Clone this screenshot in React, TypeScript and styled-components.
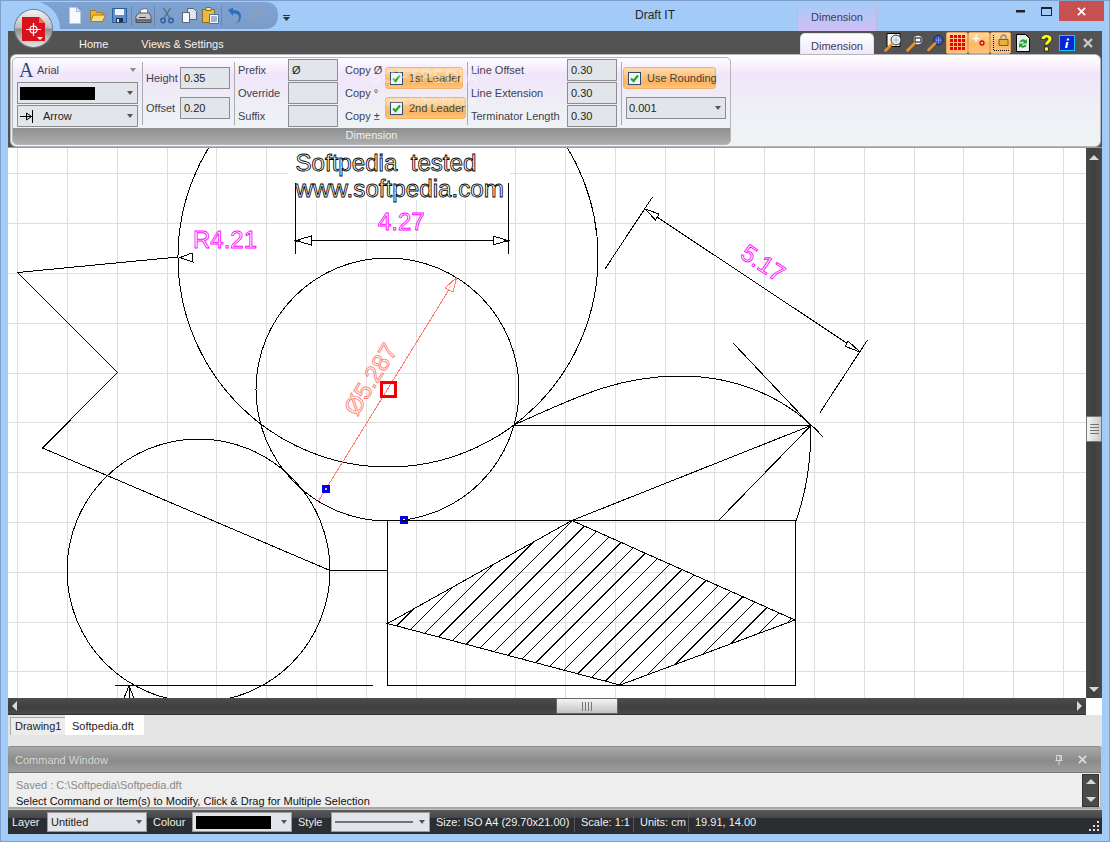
import React from 'react';
import styled, { createGlobalStyle } from 'styled-components';

const GlobalStyle = createGlobalStyle`
  html, body { margin: 0; padding: 0; background: #a2cbf7; }
  * { box-sizing: border-box; }
`;

const Window = styled.div`
  position: relative;
  width: 1110px;
  height: 842px;
  padding: 0 7px 7px;
  display: flex;
  flex-direction: column;
  overflow: hidden;
  background: #a2cbf7;
  border: 1px solid #7f9ecb;
  font-family: "Liberation Sans", Arial, sans-serif;
  font-size: 11px;
  color: #3c4250;
`;

/* title bar */
const TitleBar = styled.div`
  height: 30px;
  display: flex;
  flex: none;
`;
const Qat = styled.div`
  width: 238px;
  height: 27px;
  margin: 1px 0 0 32px;
  padding-left: 24px;
  display: flex;
  align-items: center;
  background: linear-gradient(#7ea3d2, #7b9cc8);
  clip-path: path('M0 0 H224 Q238 0 238 13 Q238 27 224 27 H20 Q20 8 0 0 Z');
`;
const QatSlot = styled.span<{ $w: number }>`
  width: ${p => p.$w}px;
  display: flex;
  justify-content: center;
  align-items: center;
`;
const QatSep = styled.i`
  width: 1px;
  height: 20px;
  background: #6c87ad;
  margin: 0 1px;
`;
const Chevron = styled.div`
  width: 15px;
  padding: 10px 0 0 5px;
`;
const AppTitle = styled.div`
  width: 504px;
  padding: 7px 0 0 220px;
  text-align: center;
  font-size: 12px;
  color: #22262c;
`;
const ContextTab = styled.div`
  width: 80px;
  height: 29px;
  margin-top: 1px;
  padding-top: 9px;
  text-align: center;
  color: #3d3d50;
  background: linear-gradient(#a4ccf6, #d0bef6);
  border-left: 1px solid #c5b8e0;
  border-right: 1px solid #c5b8e0;
`;
const WinControls = styled.div`
  margin-left: auto;
  margin-right: -2px;
  display: flex;
  align-items: flex-start;
`;
const WinBtn = styled.div<{ $w: number; $close?: boolean }>`
  width: ${p => p.$w}px;
  height: 20px;
  display: flex;
  align-items: center;
  justify-content: center;
  background: ${p => (p.$close ? '#c75050' : 'transparent')};
`;

/* ribbon */
const Ribbon = styled.div`
  height: 117px;
  flex: none;
  background: #535353;
  border-bottom: 1px solid #9c9c9c;
  display: flex;
  flex-direction: column;
`;
const TabRow = styled.div`
  height: 23px;
  display: flex;
  align-items: stretch;
  flex: none;
`;
const RibbonTab = styled.div<{ $ml: number }>`
  margin-left: ${p => p.$ml}px;
  padding-top: 7px;
  color: #f2f2f2;
  white-space: nowrap;
`;
const ActiveTab = styled.div`
  width: 74px;
  margin: 2px 0 0 auto;
  padding-top: 6px;
  text-align: center;
  color: #3d3d55;
  border-radius: 5px 5px 0 0;
  border: 1px solid #d9e2ea;
  border-bottom: 0;
  background: linear-gradient(#ffffff, #f2e6fa);
`;
const ToolStrip = styled.div`
  margin: 0 3px 0 9px;
  display: flex;
  align-items: center;
`;
const ToolBtn = styled.div<{ $w: number; $on?: boolean }>`
  width: ${p => p.$w}px;
  height: 22px;
  display: flex;
  align-items: center;
  justify-content: center;
  ${p =>
    p.$on
      ? `background: linear-gradient(#fdd9a6, #fbb965 55%, #fcc27c);
         border: 1px solid #e6a55a; border-radius: 2px;`
      : ''}
`;
const RibbonPanel = styled.div`
  height: 93px;
  margin: 0 0 0 2px;
  width: 1091px;
  padding: 2px 0 0 1px;
  border: 1px solid #b4b8bd;
  border-radius: 6px;
  background: linear-gradient(#ffffff 0, #fbf6fe 8%, #f1e5fa 22%, #eef0f5 60%, #f0f3f5 100%);
`;
const Group = styled.div`
  position: relative;
  width: 719px;
  height: 88px;
  display: flex;
  flex-direction: column;
  border: 1px solid #b5b7bc;
  border-radius: 5px;
  overflow: hidden;
`;
const GroupBody = styled.div`
  height: 70px;
  padding-top: 1px;
  display: flex;
  flex: none;
`;
const GroupCaption = styled.div`
  flex: 1;
  text-align: center;
  color: #eeeeee;
  line-height: 15px;
  background: linear-gradient(#8f8f8f, #adadad);
`;
const Col = styled.div<{ $ml: number; $w: number; $mid?: boolean }>`
  margin-left: ${p => p.$ml}px;
  width: ${p => p.$w}px;
  display: flex;
  flex-direction: column;
  gap: ${p => (p.$mid ? 8 : 1)}px;
  padding-top: ${p => (p.$mid ? 8 : 0)}px;
`;
const VRule = styled.div<{ $ml: number }>`
  width: 1px;
  margin: 3px 0 3px ${p => p.$ml}px;
  background: #a9adb3;
`;
const Row = styled.div`
  height: 22px;
  display: flex;
  align-items: center;
  white-space: nowrap;
`;
const Label = styled.span<{ $w: number; $ml?: number }>`
  width: ${p => p.$w}px;
  margin-left: ${p => p.$ml ?? 0}px;
  flex: none;
`;
const Field = styled.div`
  width: 50px;
  height: 22px;
  flex: none;
  padding-left: 3px;
  line-height: 20px;
  color: #222;
  background: #e2e6ea;
  border: 1px solid #8b8d90;
`;
const Combo = styled.div<{ $w?: number; $ml?: number }>`
  width: ${p => (p.$w ? `${p.$w}px` : '100%')};
  margin-left: ${p => p.$ml ?? 0}px;
  height: 22px;
  flex: none;
  padding: 0 2px;
  display: flex;
  align-items: center;
  color: #222;
  background: #e2e6ea;
  border: 1px solid #8b8d90;
`;
const ComboArrow = styled.i<{ $c?: string }>`
  margin-left: auto;
  margin-right: 2px;
  width: 0;
  height: 0;
  border-left: 3.5px solid transparent;
  border-right: 3.5px solid transparent;
  border-top: 4px solid ${p => p.$c ?? '#555'};
`;
const Swatch = styled.div<{ $w: number }>`
  width: ${p => p.$w}px;
  height: 13px;
  background: #000;
`;
const FontGlyph = styled.span`
  width: 20px;
  padding-left: 2px;
  font: 20px "Liberation Serif", serif;
  color: #24477e;
`;
const CheckBtn = styled.div<{ $w: number }>`
  width: ${p => p.$w}px;
  height: 22px;
  padding-left: 4px;
  display: flex;
  align-items: center;
  gap: 6px;
  color: #45423c;
  white-space: nowrap;
  border: 1px solid #f4b164;
  border-radius: 3px;
  background: linear-gradient(#ffdcae, #fdbf73 50%, #fcb45f 75%, #fdc684);
`;
const CheckBox = styled.span`
  width: 13px;
  height: 13px;
  flex: none;
  display: flex;
  background: #f2f4f6;
  border: 1px solid #2d4d73;
`;
const Watermark = styled.div<{ $x: number; $y: number; $size: number }>`
  position: absolute;
  left: ${p => p.$x}px;
  top: ${p => p.$y}px;
  font-size: ${p => p.$size}px;
  font-weight: bold;
  color: rgba(255, 255, 255, 0.35);
  white-space: nowrap;
  pointer-events: none;
`;

/* app orb */
const Orb = styled.div`
  position: absolute;
  left: 14px;
  top: 9px;
  width: 37px;
  height: 37px;
  display: flex;
  align-items: center;
  justify-content: center;
  border-radius: 50%;
  background: linear-gradient(#f4f4f4, #bcbcbc 48%, #8d8d8d 52%, #e8e8e8);
  box-shadow: 0 0 0 1px #6f7f92;
`;

/* workspace */
const Workspace = styled.div`
  height: 550px;
  flex: none;
  display: flex;
  background: #fff;
`;
const Sheet = styled.svg`
  display: block;
  flex: none;
  shape-rendering: crispEdges;
  background: #fff;
`;
const OutlineText = styled.text<{ $ink: string; $fill?: string; $size?: number }>`
  font-family: "Liberation Sans", Arial, sans-serif;
  font-size: ${p => p.$size ?? 24}px;
  white-space: pre;
  fill: ${p => p.$fill ?? 'none'};
  stroke: ${p => p.$ink};
  stroke-width: 0.85px;
  opacity: 0.99;
`;
const VScroll = styled.div`
  width: 16px;
  display: flex;
  flex-direction: column;
  align-items: center;
  background: linear-gradient(90deg, #484848, #3f3f3f 50%, #4a4a4a);
`;
const Thumb = styled.div`
  width: 16px;
  height: 26px;
  margin-top: 256px;
  display: flex;
  flex-direction: column;
  align-items: center;
  justify-content: center;
  gap: 2px;
  background: linear-gradient(90deg, #f6f6f6, #c9c9c9);
  border: 1px solid #777;
`;
const Grip = styled.i`
  width: 9px;
  height: 1px;
  background: #777;
`;
const ArrowUp = styled.i<{ $mt?: number; $c?: string }>`
  margin-top: ${p => p.$mt ?? 0}px;
  width: 0;
  height: 0;
  border-left: 5px solid transparent;
  border-right: 5px solid transparent;
  border-bottom: 5px solid ${p => p.$c ?? '#d8d8d8'};
`;
const ArrowDown = styled.i<{ $mt?: number; $c?: string }>`
  margin-top: ${p => p.$mt ?? 0}px;
  width: 0;
  height: 0;
  border-left: 5px solid transparent;
  border-right: 5px solid transparent;
  border-top: 5px solid ${p => p.$c ?? '#d8d8d8'};
`;
const HScrollRow = styled.div`
  height: 17px;
  flex: none;
  display: flex;
  background: #fff;
`;
const HScroll = styled.div`
  width: 1078px;
  display: flex;
  align-items: center;
  padding: 0 4px;
  background: linear-gradient(#4c4c4c, #3f3f3f 60%, #4a4a4a);
  border-bottom: 1px solid #333;
`;
const HThumb = styled.div`
  width: 62px;
  height: 16px;
  margin-left: 539px;
  display: flex;
  justify-content: center;
  align-items: center;
  gap: 2px;
  background: linear-gradient(#f4f4f4, #c4c4c4);
  border: 1px solid #666;
`;
const HGrip = styled.i`
  width: 1px;
  height: 9px;
  background: #777;
`;
const ArrowLeft = styled.i`
  border-top: 5px solid transparent;
  border-bottom: 5px solid transparent;
  border-right: 5px solid #d8d8d8;
`;
const ArrowRight = styled.i`
  margin-left: auto;
  border-top: 5px solid transparent;
  border-bottom: 5px solid transparent;
  border-left: 5px solid #d8d8d8;
`;

/* document tabs */
const DocStrip = styled.div`
  height: 31px;
  flex: none;
  padding-left: 2px;
  display: flex;
  align-items: flex-start;
  background: #e4e4e4;
`;
const DocTab = styled.div<{ $active?: boolean }>`
  color: #222;
  white-space: nowrap;
  ${p =>
    p.$active
      ? `width: 79px; height: 20px; padding: 5px 0 0 7px; background: #fff;`
      : `width: 55px; height: 18px; margin-top: 2px; padding: 2px 0 0 4px;
         background: #ececec; border: 1px solid #aaa; border-right: 0; border-bottom: 0;`}
`;

/* command window */
const CommandWindow = styled.div`
  flex: none;
  width: 1093px;
  display: flex;
  flex-direction: column;
`;
const CommandHead = styled.div`
  height: 27px;
  padding: 0 14px 0 7px;
  display: flex;
  align-items: center;
  color: #d6d6d6;
  border-top: 1px solid #8d8d8d;
  border-radius: 3px 3px 0 0;
  background: linear-gradient(#a8a8a8, #8b8b8b 55%, #9d9d9d);
  border-bottom: 1px solid #777;
`;
const HeadIcons = styled.div`
  margin-left: auto;
  display: flex;
  align-items: center;
  gap: 15px;
`;
const CommandBody = styled.div`
  height: 36px;
  padding: 5px 0 0 7px;
  display: flex;
  justify-content: space-between;
  background: #eeeeee;
  border: 1px solid #b9b9b9;
  border-top: 0;
  border-bottom: 2px solid #a8a8a8;
`;
const LogLine = styled.div<{ $muted?: boolean }>`
  height: 16px;
  line-height: 15px;
  color: ${p => (p.$muted ? '#8a8a8a' : '#111')};
`;
const LogScroll = styled.div`
  width: 17px;
  margin: -4px 1px 0 0;
  height: 33px;
  padding: 4px 0;
  display: flex;
  flex-direction: column;
  align-items: center;
  justify-content: space-between;
  background: #4a4a4a;
  border: 1px solid #333;
`;

/* status bar */
const StatusBar = styled.div`
  height: 24px;
  margin-top: 1px;
  flex: none;
  padding-left: 4px;
  display: flex;
  align-items: center;
  color: #f0f0f0;
  white-space: nowrap;
  background: linear-gradient(#5a5a5a, #44464a 33%, #2c2d31 34%, #2d2e32);
`;
const StatusLabel = styled.span<{ $w: number; $pl?: number }>`
  width: ${p => p.$w}px;
  padding-left: ${p => p.$pl ?? 0}px;
  flex: none;
`;
const StatusCombo = styled.div<{ $w: number }>`
  width: ${p => p.$w}px;
  height: 20px;
  flex: none;
  padding: 0 2px 0 3px;
  display: flex;
  align-items: center;
  color: #222;
  background: #e2e6ea;
  border: 1px solid #9a9a9a;
`;
const StatusCell = styled.span<{ $w: number; $last?: boolean }>`
  width: ${p => p.$w}px;
  height: 20px;
  line-height: 20px;
  padding-left: 6px;
  flex: none;
  border-right: ${p => (p.$last ? '0' : '1px solid #55575b')};
`;
const ResizeGrip = styled.svg`
  margin-left: auto;
  margin-right: 3px;
  margin-top: 8px;
`;

const DocIcon = () => (
  <svg width="14" height="17" viewBox="0 0 14 17">
    <path d="M1.5.5h7l4 4v12h-11z" fill="#f6f9fd" stroke="#b9c9dc" />
    <path d="M8.5.5v4h4" fill="#dfe8f2" stroke="#a8bbd2" />
  </svg>
);
const OpenIcon = () => (
  <svg width="17" height="15" viewBox="0 0 17 15">
    <path d="M1.5 13.5v-11h5l1 2h6v9z" fill="#e9b63f" stroke="#a87c1e" />
    <path d="M1.5 13.5l3-6.5h12l-3 6.5z" fill="#fbdd7c" stroke="#a87c1e" />
  </svg>
);
const SaveIcon = () => (
  <svg width="15" height="15" viewBox="0 0 15 15">
    <path d="M.5.5h14v14H.5z" fill="#5c8fd0" stroke="#2f5c9c" />
    <path d="M3 1h9v6H3z" fill="#eef4fb" />
    <path d="M4 10h7v4.5H4z" fill="#222f45" />
    <path d="M5 11h2v3H5z" fill="#d7e2f0" />
  </svg>
);
const PrintIcon = () => (
  <svg width="17" height="16" viewBox="0 0 17 16">
    <path d="M5 1.5l7-1 1 5-7 1z" fill="#fff" stroke="#777" />
    <path d="M1 8l3-3h10l2 3v4H1z" fill="#c6c8cc" stroke="#55585e" />
    <path d="M1 12h15v2.5H1z" fill="#7d8086" stroke="#4b4e53" />
    <path d="M4 9h7v1H4z" fill="#3a3d42" />
  </svg>
);
const CutIcon = () => (
  <svg width="14" height="17" viewBox="0 0 14 17" fill="none" stroke="#2f5ca0" strokeWidth="1.4">
    <circle cx="3" cy="13.5" r="2.2" />
    <circle cx="11" cy="13.5" r="2.2" />
    <path d="M4 11.5L10.5 1M10 11.5L3.5 1" stroke="#5b6b82" />
  </svg>
);
const CopyIcon = () => (
  <svg width="15" height="15" viewBox="0 0 15 15">
    <path d="M5.5.5h6l3 3v8h-9z" fill="#dfe6ef" stroke="#55657c" />
    <path d="M.5 4.5h7v10h-7z" fill="#f8fbff" stroke="#55657c" />
  </svg>
);
const PasteIcon = () => (
  <svg width="17" height="17" viewBox="0 0 17 17">
    <path d="M.5 2.5h12v13H.5z" fill="#eab93e" stroke="#8e6c21" />
    <path d="M4 .5h5v3H4z" fill="#f4e7b8" stroke="#8e6c21" />
    <path d="M7.5 7.5h9v9h-9z" fill="#f8fbff" stroke="#4c73a8" />
    <path d="M9 10h6M9 12h6M9 14h6" stroke="#4c73a8" />
  </svg>
);
const UndoIcon = ({ c, flip }: { c: string; flip?: boolean }) => (
  <svg width="15" height="17" viewBox="0 0 15 17" transform={flip ? 'scale(-1 1)' : undefined}>
    <path d="M1 3l5-2.5V3c5 0 8 2 8 6 0 4-2 6.500-5 7.500 2-2 3-4 3-6 0-3-2.500-4-6-4v2.500z" fill={c} />
  </svg>
);
const MagnifierIcon = ({ kind }: { kind: 'fit' | 'win' | 'all' }) => (
  <svg width="21" height="20" viewBox="0 0 21 20">
    {kind === 'fit' && <path d="M4 .5h13v13H4z" fill="#fff" stroke="#000" />}
    <circle cx="13" cy="7" r="5" fill={kind === 'all' ? '#3f56c8' : '#e8eef5'} stroke={kind === 'all' ? '#223' : '#333'} />
    {kind === 'win' && <path d="M10 5h6v4h-6z" fill="#fff" stroke="#000" />}
    {kind !== 'win' && <path d="M10.500 7h5M13 4.500v5" stroke={kind === 'all' ? '#cfe0ff' : '#888'} strokeDasharray="1 1" />}
    <path d="M9.500 10.500L2.500 17.500" stroke="#e8932c" strokeWidth="2.6" strokeLinecap="round" />
  </svg>
);
const RedGridIcon = () => (
  <svg width="15" height="15" viewBox="0 0 15 15" fill="#f00000">
    {[0, 4, 8, 12].flatMap(y => [0, 4, 8, 12].map(x => <rect key={`${x}-${y}`} x={x} y={y} width="3" height="3" />))}
  </svg>
);
const SnapIcon = () => (
  <svg width="17" height="17" viewBox="0 0 17 17">
    <path d="M1 16L15 3" stroke="#e8c9a0" />
    <path d="M5 1v7M1.500 4.500h7" stroke="#fff" strokeWidth="1.4" />
    <circle cx="11" cy="9" r="2" fill="none" stroke="#e00000" strokeWidth="1.3" />
  </svg>
);
const LockIcon = () => (
  <svg width="19" height="18" viewBox="0 0 19 18">
    <path d="M2.500 1v15.500H18" fill="none" stroke="#000" strokeDasharray="1 1" />
    <path d="M8 5.500h9v6H8z" fill="#e3b23c" stroke="#7c5d18" />
    <path d="M10 5.500V3.500a2.500 2.500 0 0 1 5 0v2" fill="none" stroke="#8a8a8a" strokeWidth="1.4" />
  </svg>
);
const RefreshDocIcon = () => (
  <svg width="14" height="18" viewBox="0 0 14 18">
    <path d="M.5.500h9l4 4v13H.5z" fill="#e9eef0" stroke="#000" />
    <path d="M3.500 8a3.500 3.500 0 0 1 6-1.500L11 5v4.500H6.500l1.500-1.500a1.800 1.800 0 0 0-3 .5z" fill="#21a52b" />
    <path d="M10.500 11a3.500 3.500 0 0 1-6 1.500L3 14V9.500h4.500L6 11a1.800 1.800 0 0 0 3-.5z" fill="#21a52b" />
  </svg>
);
const HelpIcon = () => (
  <svg width="13" height="18" viewBox="0 0 13 18">
    <path d="M1 5.500C1 2 3.500.5 6.500.5s5.500 1.700 5.500 4.500c0 3-3.500 3.500-3.500 6H4.500c0-3.500 3.500-4 3.500-6 0-1.700-3-1.700-3 .5z" fill="#ffff20" stroke="#222" strokeWidth=".8" />
    <rect x="4.500" y="13" width="4" height="4" fill="#ffff20" stroke="#222" strokeWidth=".8" />
  </svg>
);
const InfoIcon = () => (
  <svg width="16" height="16" viewBox="0 0 16 16">
    <rect x=".5" y=".5" width="15" height="15" fill="#0626d8" stroke="#18c4f0" />
    <path d="M8 3.500h2.200l-.4 2H7.600zM7.200 7h2.200l-1.200 6H6z" fill="#fff" />
  </svg>
);
const CrossIcon = ({ c, s = 9, w = 2 }: { c: string; s?: number; w?: number }) => (
  <svg width={s} height={s} viewBox="0 0 10 10">
    <path d="M1 1l8 8M9 1l-8 8" stroke={c} strokeWidth={w} />
  </svg>
);
const PinIcon = () => (
  <svg width="8" height="10" viewBox="0 0 8 10" fill="none" stroke="#dadada">
    <path d="M1.500.5h5v5h-5zM.5 5.500h7M4 6v4M5 1v4" />
  </svg>
);
const CheckMark = () => (
  <svg width="11" height="11" viewBox="0 0 11 11">
    <path d="M2 5.500l2.500 2.500L9 2.500" fill="none" stroke="#2aa52a" strokeWidth="2.200" />
  </svg>
);
const TerminatorIcon = () => (
  <svg width="14" height="13" viewBox="0 0 14 13" fill="none" stroke="#000">
    <path d="M0 6.500h13M12.500 0v13M6.500 3l5 3.500-5 3.500z" />
  </svg>
);
const AppLogo = () => (
  <svg width="23" height="24" viewBox="0 0 23 24">
    <path d="M0 0h17l6 6v18H0z" fill="#d8131c" />
    <path d="M17 0l6 6h-6z" fill="#f06a6a" />
    <path d="M11.500 6v13M4 12.500h15" stroke="#fff" strokeWidth="1.200" />
    <circle cx="11.500" cy="12.500" r="3.500" fill="none" stroke="#fff" strokeWidth="1.200" />
    <path d="M15 20h6l-3 3z" fill="#fff" />
  </svg>
);

const gridX = Array.from({ length: 22 }, (_, i) => Math.round(17.2 + 49.8 * i) + 0.5);
const gridY = Array.from({ length: 11 }, (_, i) => Math.round(173.3 + 49.8 * i) + 0.5);

// hatch: lines x + y = k cut against the rhombus edges
const rhomb: [number, number][] = [[387.5, 623.5], [572, 520.5], [795, 620], [620, 685]];
const hatch = Array.from({ length: 26 }, (_, i) => 1093 + 17.6 * (i - 7)).flatMap(k => {
  const hits: [number, number][] = [];
  rhomb.forEach(([ax, ay], i) => {
    const [bx, by] = rhomb[(i + 1) % 4];
    const sa = ax + ay - k;
    const sb = bx + by - k;
    if (sa * sb < 0) {
      const t = sa / (sa - sb);
      hits.push([ax + (bx - ax) * t, ay + (by - ay) * t]);
    }
  });
  return hits.length === 2 ? [{ k, a: hits[0], b: hits[1] }] : [];
});

const Drawing = () => (
  <Sheet width="1078" height="550" viewBox="8 148 1078 550">
    <g stroke="#dedede">
      {gridX.map(x => <line key={x} x1={x} x2={x} y1="148" y2="698" />)}
      {gridY.map(y => <line key={y} x1="8" x2="1086" y1={y} y2={y} />)}
    </g>
    <rect x="288" y="148" width="222" height="52" fill="#fff" />
    <g fill="none" stroke="#000">
      <circle cx="388" cy="257" r="210" />
      <circle cx="387.500" cy="389.500" r="131.500" />
      <circle cx="198.500" cy="570.500" r="131.500" />
      <path d="M178 257L17.500 272.500L117.500 372.500L42.500 448L330 570.500H387.500" />
      <path d="M387.500 520.500H795.500V685.500H387.500Z" />
      <path d="M115 685.500H373" />
      <path d="M129 686L124 698M129 686L134 698M129 686V698" />
      <path d="M514 425C580 395 620 376 680 376C740 376 790 400 823 437" />
      <path d="M811 425Q811 480 796 520.500" />
      <path d="M514 425.500H811L572 520.500M811 425.500L718.500 520.500M733 343L811 425.500" />
      <path d="M387.500 623.500L572 520.500L795 620L620 685Z" />
      {hatch.map(h => <line key={h.k} x1={h.a[0]} y1={h.a[1]} x2={h.b[0]} y2={h.b[1]} />)}
      {/* dimension 4.27 */}
      <path d="M295.500 183V254M508.500 183V254M296 240.500H508" />
      <path d="M296 240.500L311 236V245Z M508 240.500L493 236V245Z" fill="#fff" />
      <path d="M296 240.500h4M504 240.500h4" strokeWidth="2" />
      {/* radius */}
      <path d="M180 257.500L192 253L193 262Z" fill="#fff" />
      {/* dimension 5.17 */}
      <path d="M652.500 197L605 269M867.500 340L820 412.500M645 209L860 352" />
      <path d="M645 209L659 214L655.500 220Z M860 352L848 341L845.500 346.500Z" fill="#fff" />
      {/* diameter */}
      <g stroke="#ff7b70">
        <path d="M456.500 277.500L318.500 501" />
        <path d="M456.500 277.500L445 288L453 292Z" fill="#fff" />
      </g>
    </g>
    <OutlineText x="295.500" y="171" $ink="#000" $fill="#fff" $size={24.1}>{'Softpedia  tested'}</OutlineText>
    <OutlineText x="295.500" y="197" $ink="#000" $fill="#fff" $size={24.2}>www.softpedia.com</OutlineText>
    <OutlineText x="378" y="230" $ink="#ff00ff">4.27</OutlineText>
    <OutlineText x="193" y="248" $ink="#ff00ff">R4.21</OutlineText>
    <OutlineText x="0" y="0" $ink="#ff00ff" transform="translate(739 257) rotate(33.600)">5.17</OutlineText>
    <OutlineText x="0" y="0" $ink="#ff7b70" transform="translate(357 417) rotate(-58.500)">Ø5.287</OutlineText>
    <rect x="381.500" y="382.500" width="14" height="14" fill="none" stroke="#f00000" strokeWidth="3" />
    <rect x="323.500" y="486.500" width="5" height="5" fill="#ffb0a8" stroke="#0000f0" strokeWidth="3" />
    <rect x="401.500" y="517.500" width="5" height="5" fill="#fff" stroke="#0000f0" strokeWidth="3" />
    <path d="M401 520.500h6" stroke="#000" />
  </Sheet>
);

export default function App() {
  return (
    <Window>
      <GlobalStyle />
      <TitleBar>
        <Qat>
          <QatSlot $w={22}><DocIcon /></QatSlot>
          <QatSlot $w={22}><OpenIcon /></QatSlot>
          <QatSlot $w={22}><SaveIcon /></QatSlot>
          <QatSep />
          <QatSlot $w={20}><PrintIcon /></QatSlot>
          <QatSep />
          <QatSlot $w={22}><CutIcon /></QatSlot>
          <QatSlot $w={22}><CopyIcon /></QatSlot>
          <QatSlot $w={20}><PasteIcon /></QatSlot>
          <QatSep />
          <QatSlot $w={22}><UndoIcon c="#2f6fc0" /></QatSlot>
          <QatSlot $w={26}><UndoIcon c="#8aa0ba" flip /></QatSlot>
        </Qat>
        <Chevron>
          <svg width="7" height="6" viewBox="0 0 7 6"><path d="M0 0h7v1H0zM0 2h7L3.500 6z" fill="#333" /></svg>
        </Chevron>
        <AppTitle>Draft IT</AppTitle>
        <ContextTab>Dimension</ContextTab>
        <WinControls>
          <WinBtn $w={26}><svg width="9" height="3"><rect width="9" height="2.500" fill="#222" /></svg></WinBtn>
          <WinBtn $w={26}><svg width="11" height="9"><rect x=".5" y=".5" width="10" height="8" fill="none" stroke="#222" /><rect width="11" height="2" fill="#222" /></svg></WinBtn>
          <WinBtn $w={45} $close><CrossIcon c="#fff" s={9} /></WinBtn>
        </WinControls>
      </TitleBar>

      <Ribbon>
        <TabRow>
          <RibbonTab $ml={71}>Home</RibbonTab>
          <RibbonTab $ml={33}>Views &amp; Settings</RibbonTab>
          <ActiveTab>Dimension</ActiveTab>
          <ToolStrip>
            <ToolBtn $w={21}><MagnifierIcon kind="fit" /></ToolBtn>
            <ToolBtn $w={22}><MagnifierIcon kind="win" /></ToolBtn>
            <ToolBtn $w={20}><MagnifierIcon kind="all" /></ToolBtn>
            <ToolBtn $w={22} $on><RedGridIcon /></ToolBtn>
            <ToolBtn $w={22} $on><SnapIcon /></ToolBtn>
            <ToolBtn $w={21} $on><LockIcon /></ToolBtn>
            <ToolBtn $w={24}><RefreshDocIcon /></ToolBtn>
            <ToolBtn $w={22}><HelpIcon /></ToolBtn>
            <ToolBtn $w={20}><InfoIcon /></ToolBtn>
            <ToolBtn $w={22}><CrossIcon c="#c8c8c8" s={10} w={2.400} /></ToolBtn>
          </ToolStrip>
        </TabRow>
        <RibbonPanel>
          <Group>
            <GroupBody>
              <Col $ml={4} $w={121}>
                <Row>
                  <FontGlyph>A</FontGlyph>
                  <Label $w={60}>Arial</Label>
                  <ComboArrow $c="#8a8a8a" />
                </Row>
                <Combo><Swatch $w={75} /><ComboArrow /></Combo>
                <Combo><TerminatorIcon /><Label $w={60} $ml={9}>Arrow</Label><ComboArrow /></Combo>
              </Col>
              <VRule $ml={4} />
              <Col $ml={3} $w={84} $mid>
                <Row><Label $w={34}>Height</Label><Field>0.35</Field></Row>
                <Row><Label $w={34}>Offset</Label><Field>0.20</Field></Row>
              </Col>
              <VRule $ml={4} />
              <Col $ml={3} $w={100}>
                <Row><Label $w={50}>Prefix</Label><Field>Ø</Field></Row>
                <Row><Label $w={50}>Override</Label><Field /></Row>
                <Row><Label $w={50}>Suffix</Label><Field /></Row>
              </Col>
              <Col $ml={7} $w={37}>
                <Row>Copy Ø</Row>
                <Row>Copy °</Row>
                <Row>Copy ±</Row>
              </Col>
              <Col $ml={3} $w={81} $mid>
                <CheckBtn $w={78}><CheckBox><CheckMark /></CheckBox>1st Leader</CheckBtn>
                <CheckBtn $w={81}><CheckBox><CheckMark /></CheckBox>2nd Leader</CheckBtn>
              </Col>
              <VRule $ml={1} />
              <Col $ml={3} $w={146}>
                <Row><Label $w={96}>Line Offset</Label><Field>0.30</Field></Row>
                <Row><Label $w={96}>Line Extension</Label><Field>0.30</Field></Row>
                <Row><Label $w={96}>Terminator Length</Label><Field>0.30</Field></Row>
              </Col>
              <VRule $ml={4} />
              <Col $ml={1} $w={103} $mid>
                <CheckBtn $w={93}><CheckBox><CheckMark /></CheckBox>Use Rounding</CheckBtn>
                <Combo $w={100} $ml={3}>0.001<ComboArrow /></Combo>
              </Col>
            </GroupBody>
            <GroupCaption>Dimension</GroupCaption>
            <Watermark $x={356} $y={8} $size={19}>SOFTPEDIA</Watermark>
            <Watermark $x={370} $y={38} $size={10}>www.softpedia.com</Watermark>
          </Group>
        </RibbonPanel>
      </Ribbon>

      <Workspace>
        <Drawing />
        <VScroll>
          <ArrowUp $mt={7} />
          <Thumb><Grip /><Grip /><Grip /><Grip /></Thumb>
          <ArrowDown $mt={245} />
        </VScroll>
      </Workspace>
      <HScrollRow>
        <HScroll>
          <ArrowLeft />
          <HThumb><HGrip /><HGrip /><HGrip /><HGrip /></HThumb>
          <ArrowRight />
        </HScroll>
      </HScrollRow>

      <DocStrip>
        <DocTab>Drawing1</DocTab>
        <DocTab $active>Softpedia.dft</DocTab>
      </DocStrip>

      <CommandWindow>
        <CommandHead>
          Command Window
          <HeadIcons><PinIcon /><CrossIcon c="#dadada" s={9} /></HeadIcons>
        </CommandHead>
        <CommandBody>
          <div>
            <LogLine $muted>Saved : C:\Softpedia\Softpedia.dft</LogLine>
            <LogLine>Select Command or Item(s) to Modify, Click &amp; Drag for Multiple Selection</LogLine>
          </div>
          <LogScroll><ArrowUp /><ArrowDown /></LogScroll>
        </CommandBody>
      </CommandWindow>

      <StatusBar>
        <StatusLabel $w={35}>Layer</StatusLabel>
        <StatusCombo $w={100}>Untitled<ComboArrow /></StatusCombo>
        <StatusLabel $w={45} $pl={6}>Colour</StatusLabel>
        <StatusCombo $w={100}><Swatch $w={75} /><ComboArrow /></StatusCombo>
        <StatusLabel $w={39} $pl={6}>Style</StatusLabel>
        <StatusCombo $w={99}>
          <svg width="78" height="2"><rect y=".5" width="78" height="1" fill="#000" /></svg>
          <ComboArrow />
        </StatusCombo>
        <StatusCell $w={145}>Size: ISO A4 (29.70x21.00)</StatusCell>
        <StatusCell $w={59}>Scale: 1:1</StatusCell>
        <StatusCell $w={55}>Units: cm</StatusCell>
        <StatusCell $w={80} $last>19.91, 14.00</StatusCell>
        <ResizeGrip width="11" height="11" viewBox="0 0 11 11" fill="#ddd">
          <path d="M9 0h2v2H9zM5 4h2v2H5zM9 4h2v2H9zM1 8h2v2H1zM5 8h2v2H5zM9 8h2v2H9z" />
        </ResizeGrip>
      </StatusBar>

      <Orb><AppLogo /></Orb>
    </Window>
  );
}
